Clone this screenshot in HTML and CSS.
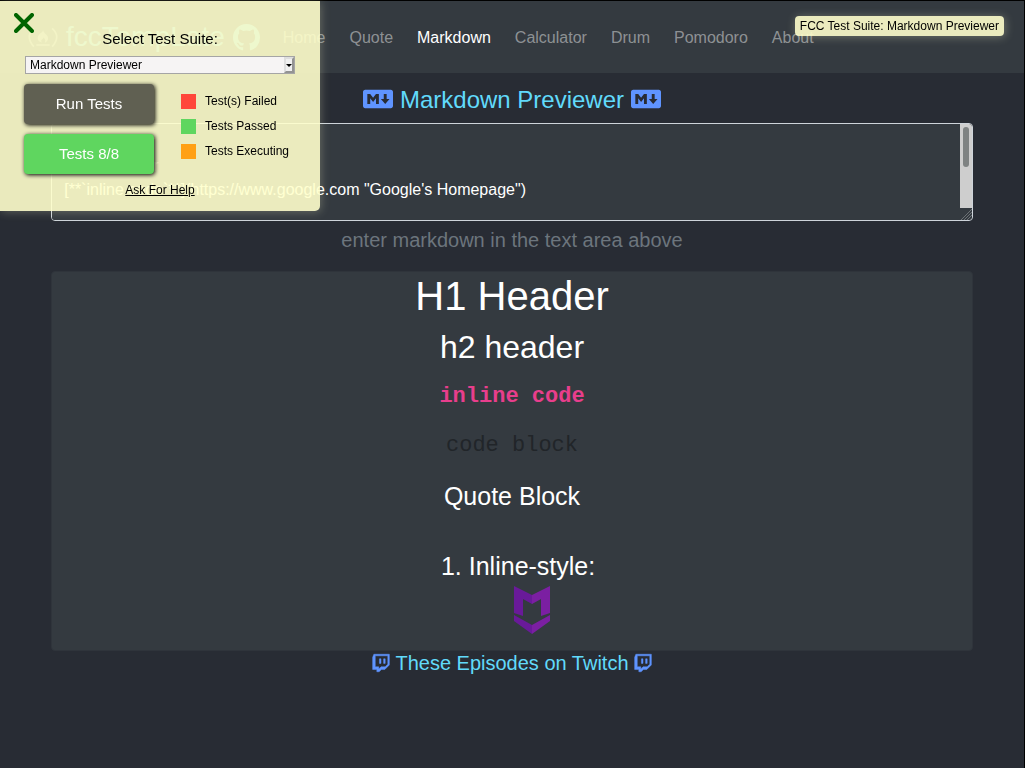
FILE: index.html
```html
<!DOCTYPE html>
<html lang="en">
<head>
<meta charset="utf-8">
<meta name="viewport" content="width=device-width, initial-scale=1">
<title>Markdown Previewer</title>
<link rel="stylesheet" href="styles.css">
</head>
<body>
<svg class="sprite" aria-hidden="true">
  <symbol id="md" viewBox="0 0 640 512" preserveAspectRatio="none"><path d="M593.800 59.100H46.200C20.700 59.100 0 79.800 0 105.200v301.500c0 25.500 20.700 46.200 46.200 46.200h547.700c25.500 0 46.200-20.700 46.100-46.100V105.200c0-25.400-20.700-46.100-46.200-46.100zM338.500 360.600H277v-120l-61.500 76.900-61.500-76.900v120H92.300V151.400h61.500l61.500 76.900 61.500-76.900h61.500v209.200zm135.300 3.100L381.500 256H443V151.400h61.500V256H566z"/></symbol>
  <symbol id="twitch" viewBox="0 0 448 512"><path d="M40.100 32L10 108.900v314.300h107V480h60.200l56.800-56.800h87l117-117V32H40.100zm357.800 254.100L331 353H224l-56.800 56.800V353H76.900V72.100h321v214zM331 149v116.900h-40.100V149H331zm-107 0v116.900h-40.100V149H224z"/></symbol>
</svg>
<header class="navbar">
  <a class="brand" href="#">
    <svg class="brand-icon camp" viewBox="0 0 36 26" fill="none" stroke="currentColor" stroke-width="2"><path d="M7 2Q-4 12 7 24M29 2q11 10 0 22M10 22h16"/><path fill="currentColor" stroke="none" d="M18 4c1 5 7 6 6 11-1 3-3 4-4 4 2-3 0-4-1-6-1 2-5 3-2 6-5-1-7-5-4-9 2-3 5-3 5-6z"/></svg>
    <span>fccTempLate</span>
    <svg class="brand-icon" viewBox="0 0 16 16" fill="currentColor"><path d="M8 0C3.580 0 0 3.580 0 8c0 3.540 2.290 6.530 5.470 7.590.4.070.55-.17.55-.38v-1.490c-2.010.37-2.530-.49-2.690-.94-.09-.23-.48-.94-.82-1.130-.28-.15-.68-.52-.01-.53.63-.01 1.080.58 1.230.82.72 1.210 1.870.87 2.330.66.070-.52.28-.87.51-1.070-1.780-.2-3.640-.89-3.640-3.950 0-.87.31-1.590.82-2.150-.08-.2-.36-1.020.08-2.120 0 0 .67-.21 2.200.82a7.600 7.600 0 0 1 4 0c1.530-1.040 2.200-.82 2.200-.82.44 1.100.16 1.920.08 2.120.51.56.82 1.270.82 2.150 0 3.070-1.870 3.750-3.650 3.950.29.25.54.73.54 1.480v2.200c0 .21.15.46.55.38A8 8 0 0 0 16 8c0-4.420-3.580-8-8-8z"/></svg>
  </a>
  <nav class="links">
    <a href="#">Home</a><a href="#">Quote</a><a class="active" href="#">Markdown</a><a href="#">Calculator</a><a href="#">Drum</a><a href="#">Pomodoro</a><a href="#">About</a>
  </nav>
</header>
<main class="main">
  <h1 class="title"><svg class="md-icon"><use href="#md"/></svg><label for="editor">Markdown Previewer</label><svg class="md-icon"><use href="#md"/></svg></h1>
  <div class="editor-wrap">
    <textarea id="editor" class="editor" spellcheck="false"># H1 Header
## h2 header
[**`inline code`**](https://www.google.com "Google's Homepage")

&#96;&#96;&#96;
code block
&#96;&#96;&#96;
> Quote Block</textarea>
    <div class="scroll-track" aria-hidden="true"><div class="scroll-thumb"></div></div>
    <svg class="grip" viewBox="0 0 12 12" stroke="#6c7175" aria-hidden="true"><path d="M1 12L12 1M4 12l8-8M7 12l5-5M10 12l2-2"/></svg>
  </div>
  <p class="hint">enter markdown in the text area above</p>
  <section class="preview">
    <h1>H1 Header</h1>
    <h2>h2 header</h2>
    <p><a href="#"><strong><code>inline code</code></strong></a></p>
    <pre><code>code block</code></pre>
    <blockquote>Quote Block</blockquote>
    <ol><li>Inline-style:<br>
      <svg class="logo" viewBox="0 0 36 48" role="img" aria-label="Logo"><path fill="#691a99" d="M0 0l18 9v9l-9-5v17L0 27zM0 29l18 10v9L0 35z"/><path fill="#7b1fa2" d="M36 0L18 9v9l9-5v17l9-3zM36 29L18 39v9l18-13z"/></svg></li></ol>
  </section>
  <footer class="footer"><a href="#"><svg class="twitch"><use href="#twitch"/></svg><span>These Episodes on Twitch</span><svg class="twitch"><use href="#twitch"/></svg></a></footer>
</main>
<div class="suite-tag">FCC Test Suite: Markdown Previewer</div>
<aside class="panel">
  <button class="close" type="button" aria-label="Close"><svg viewBox="0 0 20 20" fill="none" stroke="#006400" stroke-width="4" stroke-linecap="round"><path d="M2 2l16 16M18 2L2 18"/></svg></button>
  <label class="suite-label" for="suite">Select Test Suite:</label>
  <div class="select-wrap"><select id="suite"><option>Markdown Previewer</option></select><span class="arrow"></span></div>
  <div class="panel-body">
    <div class="buttons"><button class="run" type="button">Run Tests</button><button class="passed" type="button">Tests 8/8</button></div>
    <ul class="legend"><li><i class="red"></i>Test(s) Failed</li><li><i class="green"></i>Tests Passed</li><li><i class="orange"></i>Tests Executing</li></ul>
  </div>
  <a class="help" href="#">Ask For Help</a>
</aside>
</body>
</html>
```
FILE: styles.css
```css
* { box-sizing: border-box; }
html { background: #282c34; }
body {
  margin: 0;
  min-height: 100vh;
  border-top: 1px solid #000;
  border-right: 1px solid #000;
  color: #fff;
  font: 16px/24px "Liberation Sans", Arial, sans-serif;
  text-align: center;
}
a { text-decoration: none; color: inherit; }
button { font: inherit; cursor: pointer; }
.sprite { display: none; }
.navbar {
  display: flex;
  align-items: center;
  gap: 12px;
  min-height: 72px;
  padding: 0 24px 0 28px;
  background: #343a40;
}
.brand { display: flex; align-items: center; gap: 8px; color: rgba(97, 218, 251, .8); font-size: 28px; line-height: 32px; }
.brand-icon { width: 27px; height: 27px; }
.camp { width: 30px; color: rgba(255, 255, 255, .4); }
.links { display: flex; gap: 24px; margin-left: 11px; padding-top: 2px; color: rgba(255, 255, 255, .45); }
.links .active { color: #fff; }
.main { width: 90%; margin: 0 auto; }
.title {
  display: flex;
  align-items: center;
  justify-content: center;
  gap: 7px;
  margin: 12px 0 8px;
  color: #61dafb;
  font-size: 24px;
  font-weight: 400;
  line-height: 30px;
}
.md-icon { width: 30px; height: 24px; margin-bottom: 2px; fill: #5f94ff; }
.editor-wrap { position: relative; }
.editor {
  display: block;
  width: 100%;
  height: 98px;
  padding: 6px 24px 6px 12px;
  border: 1px solid #ced4da;
  border-radius: 4px;
  background: #343a40;
  color: #fff;
  font: inherit;
  resize: none;
  outline: none;
}
.scroll-track {
  position: absolute;
  top: 1px;
  right: 1px;
  bottom: 13px;
  width: 12px;
  padding: 3px;
  border-radius: 0 3px 0 0;
  background: #cecece;
  pointer-events: none;
}
.scroll-thumb { height: 40px; border-radius: 3px; background: #7f8383; }
.grip { position: absolute; right: 1px; bottom: 1px; width: 12px; height: 12px; pointer-events: none; }
.hint { margin: 4px 0 16px; color: #6c757d; font-size: 20px; line-height: 30px; }
.preview {
  padding-bottom: 16px;
  border: 1px solid #2f343b;
  border-radius: 4px;
  background: #343a40;
  font-size: 25px;
  line-height: 38px;
}
.preview h1, .preview h2 { margin: 0 0 8px; font-weight: 400; }
.preview h1 { font-size: 40px; line-height: 48px; }
.preview h2 { font-size: 32px; line-height: 38px; }
.preview p { margin: 0 0 14px; }
.preview code { color: #e83e8c; font: 22px/32px "Liberation Mono", monospace; font-weight: inherit; }
.preview pre { margin: 0 0 15px; line-height: 32px; }
.preview pre code { color: #212529; }
.preview blockquote { margin: 0 0 32px; }
.preview ol { display: inline-block; vertical-align: top; margin: 0; padding-left: 40px; }
.logo { display: block; width: 36px; height: 48px; margin: 1px auto 0; }
.footer { color: #61dafb; font-size: 20px; line-height: 24px; }
.footer a { display: inline-flex; align-items: center; gap: 5px; }
.twitch { width: 18px; height: 20px; fill: #5f94ff; stroke: #5f94ff; stroke-width: 12px; }
.suite-tag {
  position: fixed;
  top: 16px;
  right: 21px;
  padding: 0 5px;
  border-radius: 4px;
  background: rgba(255, 255, 204, .9);
  box-shadow: 1px 1px 10px rgba(255, 255, 204, .3);
  color: #000;
  font-size: 12px;
  line-height: 20px;
}
.panel {
  position: fixed;
  top: 1px;
  left: 0;
  width: 320px;
  padding: 28px 25px 13px;
  border-radius: 0 0 5px;
  background: rgba(255, 255, 204, .9);
  box-shadow: 1px 1px 10px rgba(255, 255, 204, .25);
  color: #000;
  font-size: 12px;
  line-height: 16px;
  text-align: center;
}
.close { position: absolute; top: 12px; left: 14px; width: 20px; height: 20px; padding: 0; border: 0; background: none; }
.close svg { display: block; }
.suite-label { display: block; font-size: 15px; line-height: 20px; }
.select-wrap { position: relative; margin: 7px 0 10px; }
.select-wrap select {
  display: block;
  width: 100%;
  height: 18px;
  padding: 0 4px;
  border: 1px solid #a5a5a5;
  border-radius: 0;
  background: #f6f4f4;
  color: #000;
  font: 12px/16px "Liberation Sans", Arial, sans-serif;
  appearance: none;
}
.arrow {
  position: absolute;
  top: 1px;
  right: 1px;
  width: 10px;
  height: 16px;
  border: 2px solid #dedede;
  border-right-color: #939393;
  border-bottom-color: #939393;
  background: #f0f0f0;
  pointer-events: none;
}
.arrow::after { content: ""; position: absolute; top: 5px; left: 0; border: 3px solid transparent; border-top-color: #000; border-bottom: 0; }
.panel-body { display: flex; gap: 27px; margin-left: -1px; }
.buttons { display: grid; gap: 10px; width: 130px; }
.buttons button { height: 40px; padding: 0; border: 0; border-radius: 4px; color: #fff; font-size: 15px; box-shadow: 1px 1px 4px #000; }
.buttons .run { background: #606052; }
.buttons .passed { background: #5fd65f; }
.legend { display: grid; align-content: start; gap: 9px; margin: 9px 0 0; padding: 0; list-style: none; }
.legend li { display: flex; align-items: center; gap: 9px; }
.legend i { width: 15px; height: 15px; }
.red { background: #ff473a; }
.green { background: #5fd65f; }
.orange { background: #ffa014; }
.help { display: inline-block; margin-top: 8px; text-decoration: underline; }
```
